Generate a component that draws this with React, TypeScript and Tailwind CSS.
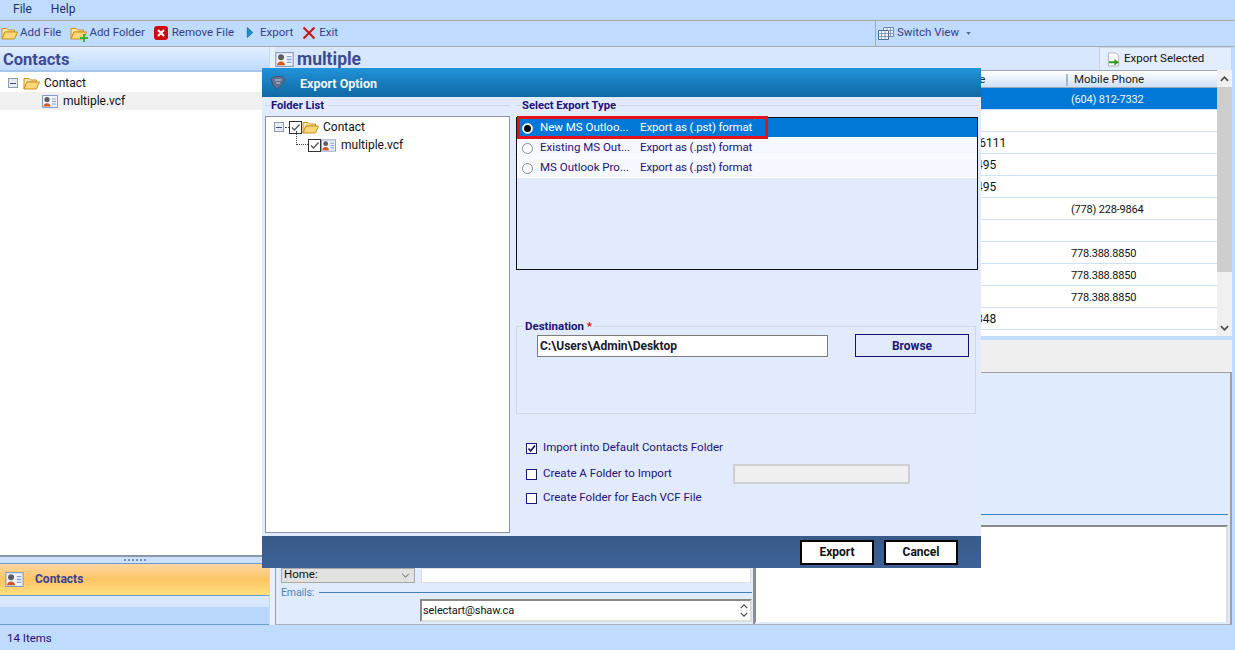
import React from "react";

const FolderOpen = ({ className = "w-[17px] h-[14px]" }: { className?: string }) => (
  <svg viewBox="0 0 17 14" className={className}>
    <path d="M1 2.5 h5 l1.5 1.5 h6 v2 H4 L1 13 Z" fill="#fbe6a8" stroke="#c8921e" strokeWidth="1" />
    <path d="M1 13 L4 6 H16.5 L13.5 13 Z" fill="#fcd67a" stroke="#c8921e" strokeWidth="1" />
  </svg>
);

const Vcard = ({ className = "w-[16px] h-[13px]" }: { className?: string }) => (
  <svg viewBox="0 0 16 13" className={className}>
    <rect x="0.5" y="0.5" width="15" height="12" fill="#eef3fb" stroke="#8a9cc0" />
    <circle cx="5" cy="4.5" r="2.6" fill="#5f5f5f" />
    <path d="M1.5 11.5 C1.5 7 8.5 7 8.5 11.5 Z" fill="#d2591a" />
    <path d="M10 4 h4 M10 6.5 h4 M10 9 h4" stroke="#8aa4d0" strokeWidth="1.2" />
  </svg>
);

const TreeMinus = () => (
  <span className="flex h-[10px] w-[10px] shrink-0 items-center justify-center border border-[#8e9ab0] bg-[#e8ecf2]">
    <span className="h-px w-[6px] bg-[#40507a]" />
  </span>
);

const Tick = () => (
  <span className="flex h-[13px] w-[13px] shrink-0 items-center justify-center border border-[#333333] bg-white">
    <svg viewBox="0 0 11 11" className="h-[11px] w-[11px]">
      <path d="M2 5.5 L4.5 8 L9.5 2.5" fill="none" stroke="#555555" strokeWidth="1.3" />
    </svg>
  </span>
);

const Radio = ({ on }: { on?: boolean }) => (
  <span className={`flex h-[11px] w-[11px] shrink-0 items-center justify-center rounded-full border ${on ? "border-[#dbe6f5] bg-white" : "border-[#8a8a8a] bg-white"}`}>
    {on && <span className="h-[7px] w-[7px] rounded-full bg-black" />}
  </span>
);

const ExportRow = ({ name, on }: { name: string; on?: boolean }) => (
  <div className={`flex h-5 items-center border-b border-white pl-[5px] pt-px ${on ? "bg-[#0078d7] text-white" : "bg-[#f5f8fe] text-[#23127a]"}`}>
    <Radio on={on} />
    <span className="ml-[7px] w-[100px] whitespace-nowrap">{name}</span>
    <span className="tracking-[-0.15px]">Export as (.pst) format</span>
  </div>
);

const Check = ({ on }: { on?: boolean }) => (
  <span className="flex h-[11px] w-[11px] shrink-0 items-center justify-center border border-[#1a1a6e] bg-white">
    {on && (
      <svg viewBox="0 0 9 9" className="h-[9px] w-[9px]">
        <path d="M1.5 4.5 L3.7 7 L8 1.5" fill="none" stroke="#14145e" strokeWidth="1.7" />
      </svg>
    )}
  </span>
);

const tableRows: [string, string, boolean?][] = [
  ["", "(604) 812-7332", true],
  ["", ""],
  ["-6111", ""],
  ["495", ""],
  ["495", ""],
  ["", "(778) 228-9864"],
  ["", ""],
  ["", "778.388.8850"],
  ["", "778.388.8850"],
  ["", "778.388.8850"],
  ["348", ""],
];

export default function App() {
  return (
    <div className="relative flex h-[650px] w-[1235px] flex-col overflow-hidden bg-[#bfdbfe] font-['Roboto',sans-serif] text-[11.5px] leading-none text-[#111111]">
      {/* Menu */}
      <div className="flex h-[20px] items-center pb-[3px] pl-[13px] text-[12px] text-[#20307a]">
        <span>File</span>
        <span className="ml-[19px]">Help</span>
      </div>

      {/* Toolbar */}
      <div className="flex h-[27px] items-center border-y border-[#a9a9a9] text-[#33418a]">
        <div className="flex w-[875px] items-center pb-[2px] pl-px">
          <FolderOpen />
          <span className="ml-[2px]">Add File</span>
          <span className="relative ml-[9px] flex">
            <FolderOpen />
            <svg viewBox="0 0 8 8" className="absolute -bottom-[2px] -right-[1px] h-[8px] w-[8px]">
              <path d="M3 0 h2 v3 h3 v2 H5 v3 H3 V5 H0 V3 h3 Z" fill="#44ad3a" />
            </svg>
          </span>
          <span className="ml-[2px]">Add Folder</span>
          <span className="ml-[9px] flex h-[14px] w-[14px] items-center justify-center rounded-[3px] bg-[#cf0a0a]">
            <svg viewBox="0 0 10 10" className="h-[10px] w-[10px]">
              <path d="M2 2 L8 8 M8 2 L2 8" stroke="white" strokeWidth="2" />
            </svg>
          </span>
          <span className="ml-[4px]">Remove File</span>
          <svg viewBox="0 0 8 12" className="ml-[12px] h-[11px] w-[8px]">
            <path d="M1 0.5 L7 6 L1 11.5 Z" fill="#1f8fcf" stroke="#14598f" strokeWidth="0.7" />
          </svg>
          <span className="ml-[6px]">Export</span>
          <svg viewBox="0 0 14 14" className="ml-[9px] h-[14px] w-[14px]">
            <path d="M1.5 1.5 L12.5 12.5 M12.5 1.5 L1.5 12.5" stroke="#cc1414" strokeWidth="2" />
          </svg>
          <span className="ml-[3px]">Exit</span>
        </div>
        <div className="flex h-[25px] items-center gap-[3px] border-l border-[#a9a9a9] pb-px pl-[2px]">
          <svg viewBox="0 0 16 13" className="h-[13px] w-[16px]">
            <path d="M5.5 0.5 h10 v9 h-10 Z" fill="#eef3fb" stroke="#6d8ab0" />
            <path d="M0.5 3.5 h10 v9 h-10 Z" fill="#f4f7fc" stroke="#4d6a90" />
            <path d="M0.5 6.5 h10 M0.5 9.5 h10 M3.5 3.5 v9 M7 3.5 v9 M10.5 3.5 h5 M10.5 6.5 h5 M9 0.5 v3 M12.5 0.5 v9" stroke="#6d8ab0" strokeWidth="0.8" />
          </svg>
          <span>Switch View</span>
          <svg viewBox="0 0 6 4" className="ml-[4px] h-[3px] w-[5px]">
            <path d="M0 0 H6 L3 4 Z" fill="#5a6a90" />
          </svg>
        </div>
      </div>

      {/* Main */}
      <div className="flex min-h-0 flex-1">
        {/* Left pane */}
        <div className="flex w-[269px] shrink-0 flex-col">
          <div className="flex h-[25px] shrink-0 items-center border-b-2 border-[#a7c4ea] bg-gradient-to-b from-[#e4effe] to-[#bfdafe] pl-[3px] pt-[3px] text-[16.5px] font-bold text-[#3c4b94]">
            Contacts
          </div>
          <div className="flex-1 bg-white pt-[2px] text-[12px]">
            <div className="flex h-[18px] items-center pl-[8px]">
              <TreeMinus />
              <span className="ml-[5px] flex"><FolderOpen /></span>
              <span className="ml-[4px]">Contact</span>
            </div>
            <div className="flex h-[18px] items-center bg-[#f0f0f0] pl-[42px]">
              <Vcard />
              <span className="ml-[5px]">multiple.vcf</span>
            </div>
          </div>
          <div className="flex h-[8px] shrink-0 items-center justify-center gap-[2px] border-t-2 border-[#8a98ad] bg-[#cfe0fb]">
            {[0, 1, 2, 3, 4, 5].map((i) => (
              <span key={i} className="h-[2px] w-[2px] bg-[#6f93c9]" />
            ))}
          </div>
          <div className="flex h-[33px] shrink-0 items-center border-y border-[#6a9bd6] bg-gradient-to-b from-[#fcd5a0] via-[#fdc565] to-[#fee07f] pb-px pl-[4px] text-[12px] text-[#3c3f94]">
            <Vcard className="h-[15px] w-[21px]" />
            <span className="ml-[10px] font-bold">Contacts</span>
          </div>
          <div className="h-[11px] shrink-0 bg-gradient-to-b from-[#dce9fe] to-[#d6e6fe]" />
          <div className="h-[18px] shrink-0 border-b border-[#6a9bd6] bg-[#b9d6fd]" />
        </div>

        {/* Right pane */}
        <div className="ml-[1px] flex min-w-0 flex-1 flex-col border-l-[5px] border-[#e6f0fe] pr-[3px]">
          <div className="flex h-[23px] shrink-0 items-center justify-between bg-[#d8e7fd]">
            <div className="flex items-center gap-[3px] pt-[2px] text-[17.5px] font-bold text-[#3c4b94]">
              <Vcard className="h-[15px] w-[19px]" />
              multiple
            </div>
            <div className="flex h-full w-[133px] items-center gap-[4px] border-x border-t border-[#c6d5ea] bg-[#e2edfe] pl-[7px]">
              <svg viewBox="0 0 14 15" className="h-[15px] w-[13px]">
                <path d="M1.5 0.5 h8 l3 3 v11 h-11 Z" fill="white" stroke="#b0b0b0" />
                <path d="M2 9.5 h6 V7 l5 3.5 -5 3.5 V11.5 H2 Z" fill="#2f9a1c" />
              </svg>
              <span>Export Selected</span>
            </div>
          </div>

          <div className="flex h-[266px] shrink-0 bg-white">
            <div className="min-w-0 flex-1">
              <div className="flex h-[18px] items-center border-y border-[#9ea9b8] bg-gradient-to-b from-white to-[#cfe0f8] pt-[2px] text-[#222222]">
                <span className="w-[791px] pl-[698px]">ne</span>
                <span className="border-l-2 border-[#a9b8cc] pl-[6px]">Mobile Phone</span>
              </div>
              {tableRows.map(([a, b, sel], i) => (
                <div
                  key={i}
                  className={`flex h-[22px] items-center border-b border-[#cfe0fb] pt-px ${sel ? "bg-[#0078d7] text-[#f1f6fc]" : "bg-white"}`}
                >
                  <span className="w-[796px] pl-[701px] text-[12px]">{a}</span>
                  <span className="text-[11px] tracking-[-0.2px]">{b}</span>
                </div>
              ))}
            </div>
            <div className="flex w-[15px] shrink-0 flex-col bg-[#f0f0f0]">
              <div className="flex h-[17px] items-center justify-center">
                <svg viewBox="0 0 10 6" className="h-[6px] w-[9px]">
                  <path d="M1 5 L5 1 L9 5" fill="none" stroke="#505050" strokeWidth="2" />
                </svg>
              </div>
              <div className="h-[185px] bg-[#cdcdcd]" />
              <div className="flex-1" />
              <div className="flex h-[17px] items-center justify-center">
                <svg viewBox="0 0 10 6" className="h-[6px] w-[9px]">
                  <path d="M1 1 L5 5 L9 1" fill="none" stroke="#505050" strokeWidth="2" />
                </svg>
              </div>
            </div>
          </div>

          <div className="h-[4px] shrink-0 bg-[#c2dcfd]" />
          <div className="h-[32px] shrink-0 bg-[#efefef]" />

          <div className="flex min-h-0 flex-1 border border-r-2 border-[#a0a0a0] border-b-[#b0b0b0] bg-[#e0ecfe]">
            {/* Left details */}
            <div className="flex w-[479px] shrink-0 flex-col justify-end border-r-2 border-[#8f8f8f] pl-[5px] pr-[1px]">
              <div className="flex items-start gap-[6px] pr-[1px]">
                <div className="flex h-[15px] w-[134px] items-center justify-between border border-[#a8a8a8] bg-[#e1e1e1] pl-[2px] pr-[4px]">
                  <span>Home:</span>
                  <svg viewBox="0 0 10 6" className="h-[5px] w-[9px]">
                    <path d="M1 1 L5 5 L9 1" fill="none" stroke="#444444" strokeWidth="1" />
                  </svg>
                </div>
                <div className="h-[15px] flex-1 border border-[#dddddd] bg-white" />
              </div>
              <div className="mt-[5px] flex items-center gap-[5px] text-[10.5px] tracking-[-0.1px] text-[#4a82c0]">
                <span>Emails:</span>
                <span className="h-px flex-1 bg-[#3f82bd]" />
              </div>
              <div className="mb-[2px] ml-[139px] mt-[1px] flex h-[23px] items-center justify-between border-2 border-[#8a8a8a] border-b-[#dddddd] border-r-[#dddddd] bg-white pr-[2px]">
                <span className="pl-[1px] text-[11px] tracking-[-0.1px]">selectart@shaw.ca</span>
                <span className="flex flex-col gap-[3px]">
                  <svg viewBox="0 0 10 6" className="h-[5px] w-[8px]">
                    <path d="M1 5 L5 1 L9 5" fill="none" stroke="#505050" strokeWidth="1.6" />
                  </svg>
                  <svg viewBox="0 0 10 6" className="h-[5px] w-[8px]">
                    <path d="M1 1 L5 5 L9 1" fill="none" stroke="#505050" strokeWidth="1.6" />
                  </svg>
                </span>
              </div>
            </div>
            {/* Right details */}
            <div className="flex min-w-0 flex-1 flex-col justify-end pr-[2px]">
              <div className="h-px bg-[#3f82bd]" />
              <div className="mb-[2px] mt-[10px] h-[97px] border-t-2 border-l border-[#8a8a8a] border-r-2 border-r-[#dddddd] bg-white" />
            </div>
          </div>
        </div>
      </div>

      {/* Status */}
      <div className="flex h-[25px] shrink-0 items-center pl-[7px] pt-[2px] text-[#23127a]">14 Items</div>

      {/* Dialog */}
      <div className="absolute left-[262px] top-[68px] flex h-[500px] w-[719px] flex-col bg-[#e1ebfd] text-[#23127a]">
        <div className="flex h-[29px] shrink-0 items-center bg-gradient-to-b from-[#2193da] to-[#0f69a4] pl-[8px] pt-[3px] text-[12.5px] font-bold text-[#f2f7fb]">
          <svg viewBox="0 0 16 14" className="-mt-[3px] h-[14px] w-[16px]">
            <path d="M1 3 L5 0.5 H12 L15 3 L12 9 L7 13 L3 9 Z" fill="#5f7390" stroke="#3f5474" strokeWidth="1" />
            <path d="M5 4 h6 M6 7 h4" stroke="#c2ccdc" strokeWidth="1" />
          </svg>
          <span className="ml-[14px]">Export Option</span>
        </div>

        <div className="flex min-h-0 flex-1">
          {/* Folder List */}
          <div className="flex w-[254px] shrink-0 flex-col pl-[3px] pr-[6px] pt-[3px]">
            <div className="relative flex h-[16px] shrink-0 items-start">
              <span className="absolute left-0 right-0 top-[5px] h-px bg-[#cdd6e4]" />
              <span className="relative ml-[6px] bg-[#e1ebfd] pr-[3px] text-[11.2px] font-bold">Folder List</span>
            </div>
            <div className="h-[417px] border border-[#8d93a3] bg-white pl-[8px] pt-[1px] text-[12px] text-[#111111]">
              <div className="flex h-[18px] items-center">
                <TreeMinus />
                <span className="ml-px h-0 w-[4px] border-t border-dotted border-[#444444]" />
                <Tick />
                <span className="flex"><FolderOpen /></span>
                <span className="ml-[4px]">Contact</span>
              </div>
              <div className="relative flex h-[18px] items-center pl-[34px]">
                <span className="absolute left-[22px] -top-[5px] h-[14px] w-[12px] border-b border-l border-dotted border-[#444444]" />
                <Tick />
                <span className="flex"><Vcard className="h-[13px] w-[15px]" /></span>
                <span className="ml-[5px]">multiple.vcf</span>
              </div>
            </div>
          </div>

          {/* Right column */}
          <div className="flex min-w-0 flex-1 flex-col pr-[3px] pt-[3px]">
            <div className="relative flex h-[17px] shrink-0 items-start">
              <span className="absolute left-0 right-0 top-[5px] h-px bg-[#cdd6e4]" />
              <span className="relative ml-[6px] bg-[#e1ebfd] pr-[3px] text-[11.2px] font-bold">Select Export Type</span>
            </div>
            <div className="h-[153px] shrink-0 border border-[#111111]">
              <div className="relative">
                <ExportRow name="New MS Outloo..." on />
                <span className="absolute -top-[2px] left-0 h-[23px] w-[251px] border-[3px] border-[#e4101c]" />
                <ExportRow name="Existing MS Out..." />
                <ExportRow name="MS Outlook Pro..." />
              </div>
            </div>

            <div className="relative mr-[2px] mt-[56px] h-[88px] shrink-0 border border-[#d3d8e0]">
              <span className="absolute -top-[6px] left-[6px] bg-[#e1ebfd] px-[2px] text-[11.5px] font-bold">
                Destination <span className="text-[#e00000]">*</span>
              </span>
              <div className="flex items-start pl-[20px] pt-[8px]">
                <div className="flex h-[22px] w-[291px] items-center border border-[#7c7c7c] bg-white pl-[2px] text-[12px] font-bold text-[#1a1a2e]">
                  C:\Users\Admin\Desktop
                </div>
                <div className="-mt-[1px] ml-[27px] flex h-[23px] w-[114px] items-center justify-center border border-[#14146e] text-[12px] font-bold">
                  Browse
                </div>
              </div>
            </div>

            <div className="mt-[27px] flex flex-col pl-[10px]">
              <div className="flex h-[14px] items-center gap-[6px]">
                <Check on />
                <span>Import into Default Contacts Folder</span>
              </div>
              <div className="mt-[12px] flex h-[14px] items-center gap-[6px]">
                <Check />
                <span className="w-[184px]">Create A Folder to Import</span>
                <span className="h-[20px] w-[177px] border-2 border-[#cfcfd2] bg-[#efefef]" />
              </div>
              <div className="mt-[10px] flex h-[14px] items-center gap-[6px]">
                <Check />
                <span>Create Folder for Each VCF File</span>
              </div>
            </div>
          </div>
        </div>

        <div className="flex h-[32px] shrink-0 items-center justify-end gap-[10px] bg-gradient-to-b from-[#375a8a] to-[#3e6296] pr-[23px] text-[12px]">
          <div className="flex h-[25px] w-[74px] items-center justify-center border-2 border-black bg-white font-bold text-[#111111]">Export</div>
          <div className="flex h-[25px] w-[74px] items-center justify-center border-2 border-black bg-white font-bold text-[#111111]">Cancel</div>
        </div>
      </div>
    </div>
  );
}
